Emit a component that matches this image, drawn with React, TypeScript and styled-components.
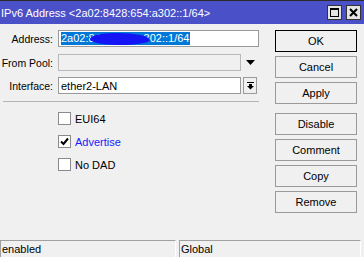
import React from "react";
import styled, { createGlobalStyle } from "styled-components";

const Global = createGlobalStyle`
  html, body { margin: 0; padding: 0; background: #f0f0f0; }
  body { font-family: "Liberation Sans", Arial, sans-serif; font-size: 11px; color: #000; }
`;

const Window = styled.div`
  width: 364px;
  height: 257px;
  display: flex;
  flex-direction: column;
  background: #f0f0f0;
  overflow: hidden;
  border-top: 1px solid #2a2a2a;
  box-sizing: border-box;
`;

const TitleBar = styled.div`
  height: 23px;
  flex: none;
  background: #4a50c8;
  display: flex;
  align-items: center;
  padding: 0 3px 0 1px;
  color: #fff;
  font-size: 11px;
`;

const TitleText = styled.div`
  flex: 1;
  white-space: nowrap;
`;

const TitleButtons = styled.div`
  display: flex;
  gap: 4px;
`;

const TitleBtn = styled.div`
  width: 13px;
  height: 13px;
  background: #e4e4e4;
  border: 1px solid #333;
  display: flex;
  align-items: center;
  justify-content: center;
`;

const Body = styled.div`
  flex: 1;
  display: flex;
  padding-top: 6px;
`;

const Form = styled.div`
  width: 259px;
  display: flex;
  flex-direction: column;
`;

const Row = styled.div<{ $mb: number }>`
  display: flex;
  align-items: center;
  height: 17px;
  margin-bottom: ${(p) => p.$mb}px;
`;

const Label = styled.div`
  width: 53px;
  text-align: right;
  padding-right: 5px;
  white-space: nowrap;
  font-size: 10.5px;
`;

const Field = styled.div<{ $w: number; $disabled?: boolean }>`
  position: relative;
  width: ${(p) => p.$w}px;
  height: 17px;
  box-sizing: border-box;
  border: 1px solid ${(p) => (p.$disabled ? "#b9b9b9" : "#9a9a9a")};
  background: ${(p) => (p.$disabled ? "#f0f0f0" : "#fff")};
  display: flex;
  align-items: center;
  padding-left: 2px;
  white-space: nowrap;
  overflow: hidden;
`;

const Selected = styled.span`
  background: #0078d7;
  color: #fff;
  line-height: 13px;
  padding-right: 1px;
`;

const Blob = styled.span`
  position: absolute;
  left: 31px;
  top: 2px;
  width: 60px;
  height: 12px;
  background: #1414f5;
  border-radius: 40% 55% 50% 45% / 50% 60% 40% 50%;
`;

const ArrowSlot = styled.div`
  width: 18px;
  display: flex;
  justify-content: center;
  align-items: center;
`;

const DropBtn = styled.div`
  margin-left: 2px;
  width: 14px;
  height: 17px;
  box-sizing: border-box;
  border: 1px solid #9a9a9a;
  background: #f0f0f0;
  display: flex;
  align-items: center;
  justify-content: center;
`;

const Separator = styled.div`
  margin-left: 3px;
  height: 1px;
  background: #b4b4b4;
`;

const Checks = styled.div`
  display: flex;
  flex-direction: column;
  gap: 10px;
  padding-left: 58px;
  padding-top: 10px;
`;

const CheckRow = styled.div<{ $blue?: boolean }>`
  display: flex;
  align-items: center;
  gap: 4px;
  height: 13px;
  color: ${(p) => (p.$blue ? "#1a1aff" : "#000")};
`;

const Box = styled.div`
  width: 13px;
  height: 13px;
  box-sizing: border-box;
  border: 1px solid #8a8a8a;
  background: #fff;
  display: flex;
  align-items: center;
  justify-content: center;
`;

const Buttons = styled.div`
  margin-left: 16px;
  display: flex;
  flex-direction: column;
`;

const Btn = styled.div<{ $default?: boolean; $mt: number }>`
  width: 82px;
  height: 22px;
  box-sizing: border-box;
  margin-top: ${(p) => p.$mt}px;
  border: 1px solid ${(p) => (p.$default ? "#000" : "#9a9a9a")};
  background: #f0f0f0;
  display: flex;
  align-items: center;
  justify-content: center;
`;

const StatusBar = styled.div`
  height: 17px;
  flex: none;
  display: flex;
  gap: 3px;
  padding-right: 3px;
`;

const StatusField = styled.div<{ $w: number }>`
  width: ${(p) => p.$w}px;
  box-sizing: border-box;
  border-top: 1px solid #a0a0a0;
  border-left: 1px solid #a0a0a0;
  border-right: 1px solid #fff;
  padding-left: 1px;
  padding-top: 2px;
  white-space: nowrap;
`;

const Check = () => (
  <svg width="9" height="9" viewBox="0 0 9 9">
    <path d="M1 4.5 L3.5 7 L8 1.5" stroke="#000" strokeWidth="2" fill="none" />
  </svg>
);

export default function App() {
  return (
    <>
      <Global />
      <Window>
        <TitleBar>
          <TitleText>IPv6 Address &lt;2a02:8428:654:a302::1/64&gt;</TitleText>
          <TitleButtons>
            <TitleBtn>
              <svg width="9" height="9" viewBox="0 0 9 9">
                <rect x="0.5" y="0.5" width="8" height="8" fill="none" stroke="#000" />
                <rect x="0" y="0" width="9" height="2" fill="#000" />
              </svg>
            </TitleBtn>
            <TitleBtn>
              <svg width="9" height="9" viewBox="0 0 9 9">
                <path d="M1 1 L8 8 M8 1 L1 8" stroke="#000" strokeWidth="2" />
              </svg>
            </TitleBtn>
          </TitleButtons>
        </TitleBar>
        <Body>
          <Form>
            <Row $mb={7}>
              <Label>Address:</Label>
              <Field $w={201}>
                <Selected>2a02:8428:654:a302::1/64</Selected>
                <Blob />
              </Field>
            </Row>
            <Row $mb={6}>
              <Label>From Pool:</Label>
              <Field $w={183} $disabled />
              <ArrowSlot>
                <svg width="9" height="5" viewBox="0 0 9 5">
                  <path d="M0 0 L9 0 L4.5 5 Z" fill="#000" />
                </svg>
              </ArrowSlot>
            </Row>
            <Row $mb={7}>
              <Label>Interface:</Label>
              <Field $w={183}>ether2-LAN</Field>
              <DropBtn>
                <svg width="7" height="8" viewBox="0 0 7 8">
                  <rect x="0" y="0" width="7" height="1" fill="#000" />
                  <rect x="2" y="2" width="3" height="2" fill="#000" />
                  <path d="M0 4 L7 4 L3.5 7.5 Z" fill="#000" />
                </svg>
              </DropBtn>
            </Row>
            <Separator />
            <Checks>
              <CheckRow>
                <Box />
                EUI64
              </CheckRow>
              <CheckRow $blue>
                <Box>
                  <Check />
                </Box>
                Advertise
              </CheckRow>
              <CheckRow>
                <Box />
                No DAD
              </CheckRow>
            </Checks>
          </Form>
          <Buttons>
            <Btn $default $mt={0}>OK</Btn>
            <Btn $mt={4}>Cancel</Btn>
            <Btn $mt={4}>Apply</Btn>
            <Btn $mt={9}>Disable</Btn>
            <Btn $mt={4}>Comment</Btn>
            <Btn $mt={4}>Copy</Btn>
            <Btn $mt={4}>Remove</Btn>
          </Buttons>
        </Body>
        <StatusBar>
          <StatusField $w={176}>enabled</StatusField>
          <StatusField $w={182}>Global</StatusField>
        </StatusBar>
      </Window>
    </>
  );
}
